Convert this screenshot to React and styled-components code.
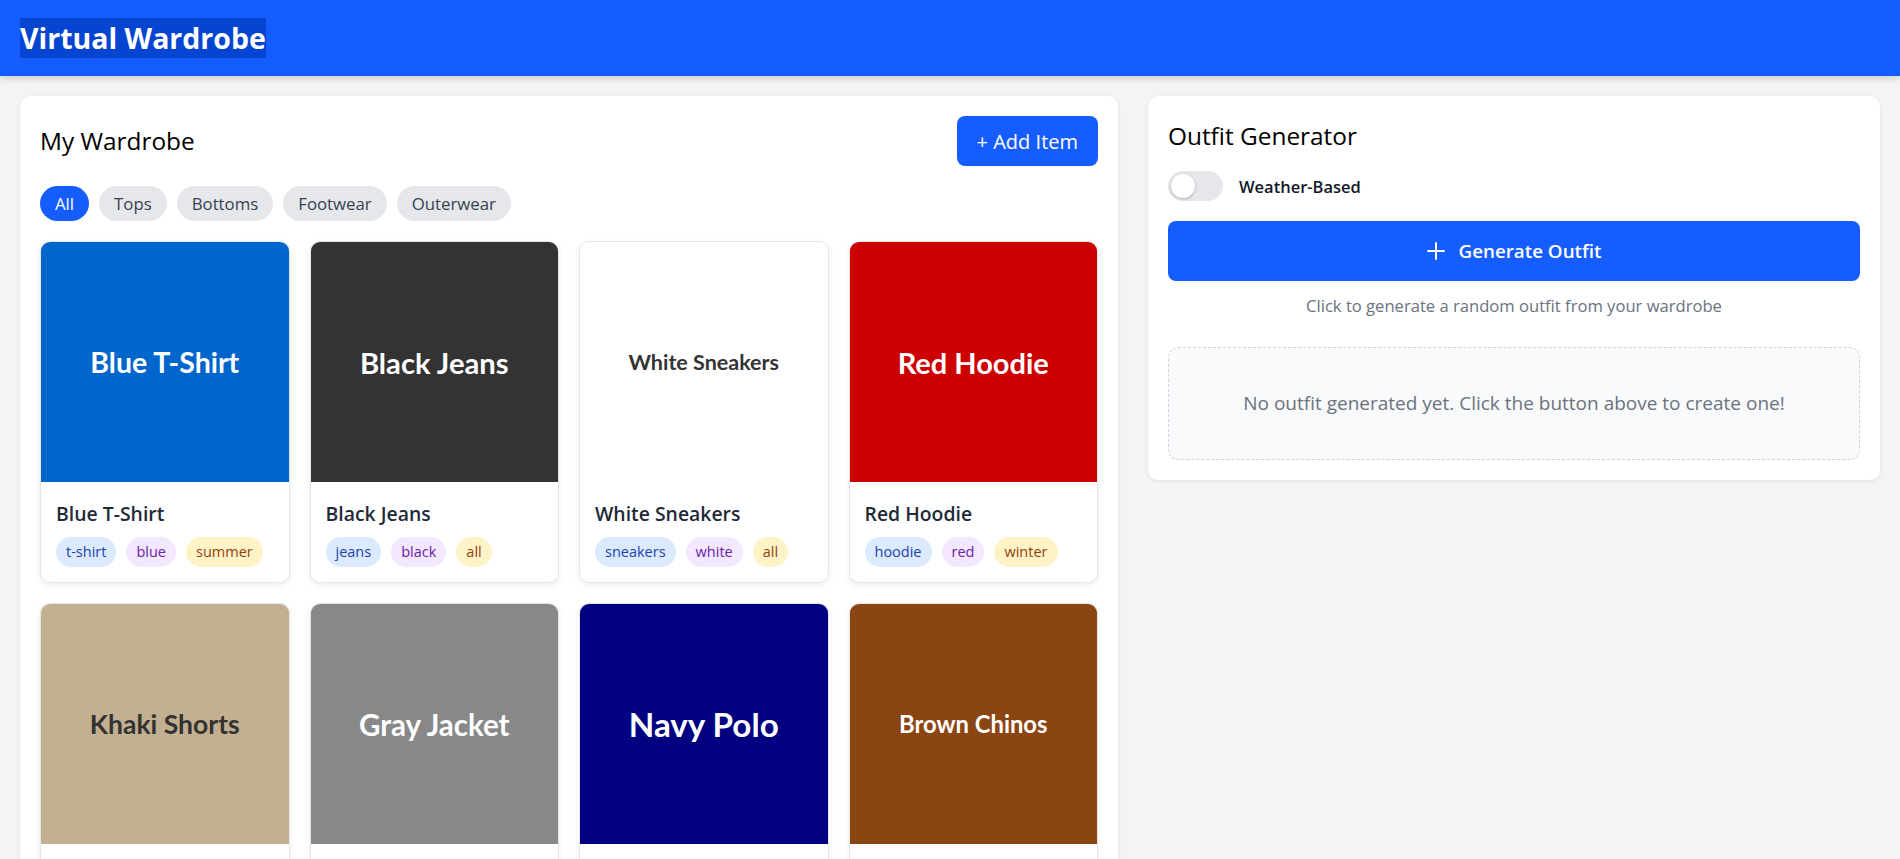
import React, { useState } from "react";
import styled, { createGlobalStyle } from "styled-components";

const GlobalStyle = createGlobalStyle`
  * { box-sizing: border-box; }
  body {
    margin: 0;
    background: #f3f4f6;
    font-family: "Open Sans", "Noto Sans", sans-serif;
    color: #111827;
  }
`;

const items = [
  { name: "Blue T-Shirt", bg: "#0066cc", fg: "#fff", size: 28.5, tags: ["t-shirt", "blue", "summer"] },
  { name: "Black Jeans", bg: "#333333", fg: "#fff", size: 29.2, tags: ["jeans", "black", "all"] },
  { name: "White Sneakers", bg: "#ffffff", fg: "#333", size: 21.5, tags: ["sneakers", "white", "all"] },
  { name: "Red Hoodie", bg: "#cc0000", fg: "#fff", size: 29, tags: ["hoodie", "red", "winter"] },
  { name: "Khaki Shorts", bg: "#c3b091", fg: "#333", size: 26.5, tags: ["shorts", "khaki", "summer"] },
  { name: "Gray Jacket", bg: "#888888", fg: "#fff", size: 29.5, tags: ["jacket", "gray", "fall"] },
  { name: "Navy Polo", bg: "#000080", fg: "#fff", size: 33.2, tags: ["polo", "navy", "spring"] },
  { name: "Brown Chinos", bg: "#8b4513", fg: "#fff", size: 23.8, tags: ["chinos", "brown", "all"] },
];

const filters = ["All", "Tops", "Bottoms", "Footwear", "Outerwear"];
const tagKinds = ["type", "color", "season"];

export default function App() {
  const [filter, setFilter] = useState("All");
  const [weather, setWeather] = useState(false);

  return (
    <>
      <GlobalStyle />
      <S.Header>
        <S.Logo>Virtual Wardrobe</S.Logo>
      </S.Header>
      <S.Main>
        <S.Panel>
          <S.PanelHead>
            <S.Title>My Wardrobe</S.Title>
            <S.AddButton>+ Add Item</S.AddButton>
          </S.PanelHead>
          <S.Filters>
            {filters.map((f) => (
              <S.Pill key={f} $active={f === filter} onClick={() => setFilter(f)}>
                {f}
              </S.Pill>
            ))}
          </S.Filters>
          <S.Grid>
            {items.map((item) => (
              <S.Card key={item.name}>
                <S.Picture $bg={item.bg} $fg={item.fg} $size={item.size}>
                  {item.name}
                </S.Picture>
                <S.CardBody>
                  <S.CardName>{item.name}</S.CardName>
                  <S.Tags>
                    {item.tags.map((t, i) => (
                      <S.Tag key={t} $kind={tagKinds[i]}>
                        {t}
                      </S.Tag>
                    ))}
                  </S.Tags>
                </S.CardBody>
              </S.Card>
            ))}
          </S.Grid>
        </S.Panel>

        <S.Panel>
          <S.Title $spaced>Outfit Generator</S.Title>
          <S.ToggleRow>
            <S.Switch $on={weather} onClick={() => setWeather(!weather)}>
              <S.Knob $on={weather} />
            </S.Switch>
            <S.ToggleLabel>Weather-Based</S.ToggleLabel>
          </S.ToggleRow>
          <S.GenerateButton>
            <svg width="18" height="18" viewBox="0 0 18 18" fill="none" stroke="currentColor" strokeWidth="2" strokeLinecap="round">
              <path d="M9 1v16M1 9h16" />
            </svg>
            Generate Outfit
          </S.GenerateButton>
          <S.Hint>Click to generate a random outfit from your wardrobe</S.Hint>
          <S.Empty>No outfit generated yet. Click the button above to create one!</S.Empty>
        </S.Panel>
      </S.Main>
    </>
  );
}

const tagColors = {
  type: { bg: "#dbeafe", fg: "#1e40af" },
  color: { bg: "#f3e8ff", fg: "#6b21a8" },
  season: { bg: "#fef3c7", fg: "#92400e" },
};

const S = {
  Header: styled.header`
    background: #165dff;
    padding: 18px 20px;
    box-shadow: 0 2px 8px rgba(0, 0, 0, 0.18);
  `,
  Logo: styled.h1`
    display: inline-block;
    margin: 0;
    font-size: 28.5px;
    line-height: 40px;
    font-weight: 700;
    color: #fff;
    background: #0645d1;
  `,
  Main: styled.main`
    display: grid;
    grid-template-columns: 3fr 2fr;
    gap: 30px;
    align-items: start;
    padding: 20px;
  `,
  Panel: styled.section`
    background: #fff;
    border-radius: 10px;
    padding: 20px;
    box-shadow: 0 1px 4px rgba(0, 0, 0, 0.08);
  `,
  PanelHead: styled.div`
    display: flex;
    justify-content: space-between;
    align-items: center;
    margin-bottom: 20px;
  `,
  Title: styled.h2`
    margin: 0 0 ${(p) => (p.$spaced ? "15px" : "0")};
    font-size: 24.4px;
    line-height: 40px;
    font-weight: 500;
    color: #000;
  `,
  AddButton: styled.button`
    height: 50px;
    padding: 0 20px;
    border: none;
    border-radius: 8px;
    background: #165dff;
    color: #fff;
    font-family: inherit;
    font-size: 20px;
    cursor: pointer;
  `,
  Filters: styled.div`
    display: flex;
    gap: 10px;
    margin-bottom: 20px;
  `,
  Pill: styled.button`
    padding: 6px 15px;
    border: none;
    border-radius: 999px;
    font-family: inherit;
    font-size: 16.8px;
    line-height: 23px;
    font-weight: 500;
    background: ${(p) => (p.$active ? "#165dff" : "#e5e7eb")};
    color: ${(p) => (p.$active ? "#fff" : "#374151")};
    cursor: pointer;
  `,
  Grid: styled.div`
    display: grid;
    grid-template-columns: repeat(4, 1fr);
    gap: 20px;
  `,
  Card: styled.div`
    border: 1px solid #e5e7eb;
    border-radius: 10px;
    overflow: hidden;
    background: #fff;
    box-shadow: 0 2px 6px rgba(0, 0, 0, 0.08);
  `,
  Picture: styled.div`
    height: 240px;
    display: flex;
    align-items: center;
    justify-content: center;
    background: ${(p) => p.$bg};
    color: ${(p) => p.$fg};
    font-family: Lato, sans-serif;
    font-weight: 700;
    font-size: ${(p) => p.$size}px;
  `,
  CardBody: styled.div`
    padding: 17px 15px 15px;
  `,
  CardName: styled.div`
    font-size: 19.4px;
    line-height: 30px;
    font-weight: 600;
    color: #1f2937;
    margin-bottom: 8px;
  `,
  Tags: styled.div`
    display: flex;
    gap: 10px;
  `,
  Tag: styled.span`
    padding: 5px 10px;
    border-radius: 15px;
    font-size: 14.5px;
    line-height: 20px;
    background: ${(p) => tagColors[p.$kind].bg};
    color: ${(p) => tagColors[p.$kind].fg};
  `,
  ToggleRow: styled.div`
    display: flex;
    align-items: center;
    gap: 16px;
    margin-bottom: 20px;
  `,
  Switch: styled.div`
    position: relative;
    width: 55px;
    height: 30px;
    border-radius: 15px;
    background: ${(p) => (p.$on ? "#165dff" : "#e5e7eb")};
    cursor: pointer;
  `,
  Knob: styled.span`
    position: absolute;
    top: 3px;
    left: ${(p) => (p.$on ? "28px" : "3px")};
    width: 24px;
    height: 24px;
    border-radius: 50%;
    background: #fff;
    box-shadow: 0 1px 3px rgba(0, 0, 0, 0.25);
  `,
  ToggleLabel: styled.span`
    font-size: 16.5px;
    font-weight: 600;
    color: #111827;
  `,
  GenerateButton: styled.button`
    width: 100%;
    height: 60px;
    display: flex;
    align-items: center;
    justify-content: center;
    gap: 14px;
    border: none;
    border-radius: 8px;
    background: #165dff;
    color: #fff;
    font-family: inherit;
    font-size: 18.8px;
    font-weight: 600;
    cursor: pointer;
  `,
  Hint: styled.p`
    margin: 12px 0 27.5px;
    text-align: center;
    font-size: 16.6px;
    line-height: 26px;
    color: #6b7280;
  `,
  Empty: styled.div`
    padding: 42px 20px;
    border: 1.5px dashed #d1d5db;
    border-radius: 10px;
    background: #f9fafb;
    text-align: center;
    font-size: 19px;
    line-height: 27px;
    color: #6b7280;
  `,
};
